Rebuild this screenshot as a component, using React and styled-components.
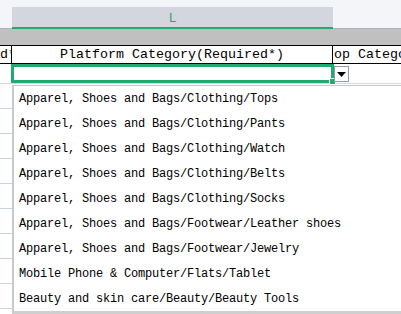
import React from "react";
import styled, { createGlobalStyle } from "styled-components";

const Global = createGlobalStyle`
  html, body { margin: 0; padding: 0; background: #ffffff; }
  #root { width: 401px; height: 314px; }
`;

const GREEN = "#1fab6e";
const MONO = `"Liberation Mono", "DejaVu Sans Mono", monospace`;

const Sheet = styled.div`
  position: relative;
  width: 401px;
  height: 314px;
  overflow: hidden;
  background: #ffffff;
  display: flex;
  flex-direction: column;
  & > * { flex-shrink: 0; }
`;

const ColumnBar = styled.div`
  box-sizing: border-box;
  height: 29px;
  padding: 7px 0 0 12px;
  background: #f4f5f8;
  border-bottom: 1px solid #aab6c8;
  display: flex;
  align-items: flex-start;
`;

const ColumnHead = styled.div`
  box-sizing: border-box;
  width: 321px;
  height: 22px;
  margin-bottom: -1px;
  background: #d3d6de;
  border-bottom: 2px solid ${GREEN};
  display: flex;
  align-items: center;
  justify-content: center;
  color: ${GREEN};
  font-family: "Liberation Sans", Arial, sans-serif;
  font-size: 13px;
  padding-top: 1px;
`;

const Band = styled.div`
  height: 16px;
  background: #c0c0c0;
`;

const Row = styled.div`
  display: grid;
  grid-template-columns: 12px 321px 1fr;
  height: ${(p) => p.$h}px;
  box-sizing: border-box;
  border-top: ${(p) => (p.$top ? `1px solid ${p.$top}` : "none")};
  border-bottom: ${(p) => (p.$bottom ? `1px solid ${p.$bottom}` : "none")};
`;

const HeadCell = styled.div`
  box-sizing: border-box;
  overflow: hidden;
  white-space: nowrap;
  display: flex;
  align-items: center;
  justify-content: ${(p) => p.$justify || "center"};
  border-right: ${(p) => (p.$line ? "1px solid #000" : "none")};
  font-family: ${MONO};
  font-size: 13.33px;
  color: #000;
  line-height: 1;
`;

const Clip = styled.span`
  margin-right: ${(p) => p.$mr || 0}px;
  padding-left: ${(p) => p.$pl || 0}px;
`;

const Cell = styled.div`
  position: relative;
  box-sizing: border-box;
  display: flex;
  align-items: center;
`;

const Selected = styled.div`
  position: absolute;
  left: -1px;
  right: -1px;
  top: 0;
  bottom: 0;
  border: 3px solid ${GREEN};
`;

const Handle = styled.div`
  position: absolute;
  right: -3px;
  bottom: -2px;
  width: 5px;
  height: 5px;
  background: ${GREEN};
  border: 1px solid #ffffff;
`;

const DropButton = styled.div`
  box-sizing: border-box;
  width: 15px;
  height: 16px;
  margin-left: 1px;
  margin-top: 1px;
  background: #ffffff;
  border: 1px solid #8f9bb0;
  display: flex;
  align-items: center;
  justify-content: center;
`;

const Grid = styled.div`
  display: flex;
  flex-direction: column;
`;

const GridLine = styled.div`
  height: 25px;
  flex: none;
  box-sizing: border-box;
  border-bottom: 1px solid #c9d2e2;
  width: 12px;
`;

const Menu = styled.div`
  position: absolute;
  left: 12px;
  top: 85px;
  width: 400px;
  height: 229px;
  box-sizing: border-box;
  background: #ffffff;
  border-top: 1px solid #c8c8c8;
  border-left: 2px solid #c6cad2;
  border-bottom: 3px solid #cfcfcf;
  display: flex;
  flex-direction: column;
`;

const Item = styled.div`
  height: 25px;
  flex: none;
  display: flex;
  align-items: center;
  padding-left: 5px;
  font-family: ${MONO};
  font-size: 12px;
  letter-spacing: -0.2px;
  color: #000;
  white-space: nowrap;
`;

const items = [
  "Apparel, Shoes and Bags/Clothing/Tops",
  "Apparel, Shoes and Bags/Clothing/Pants",
  "Apparel, Shoes and Bags/Clothing/Watch",
  "Apparel, Shoes and Bags/Clothing/Belts",
  "Apparel, Shoes and Bags/Clothing/Socks",
  "Apparel, Shoes and Bags/Footwear/Leather shoes",
  "Apparel, Shoes and Bags/Footwear/Jewelry",
  "Mobile Phone & Computer/Flats/Tablet",
  "Beauty and skin care/Beauty/Beauty Tools",
];

export default function App() {
  return (
    <>
      <Global />
      <Sheet>
        <ColumnBar>
          <ColumnHead>L</ColumnHead>
        </ColumnBar>
        <Band />
        <Row $h={19} $top="#000" $bottom="#000">
          <HeadCell $line $justify="flex-end">
            <Clip $mr={-5}>d*</Clip>
          </HeadCell>
          <HeadCell $line>Platform Category(Required*)</HeadCell>
          <HeadCell $justify="flex-start">
            <Clip $pl={1}>op Category(Required*)</Clip>
          </HeadCell>
        </Row>
        <Row $h={20} $bottom="#d3d9e4">
          <Cell />
          <Cell>
            <Selected />
            <Handle />
          </Cell>
          <Cell>
            <DropButton>
              <svg width="9" height="5" viewBox="0 0 9 5">
                <polygon points="0,0 9,0 4.5,5" fill="#000" />
              </svg>
            </DropButton>
          </Cell>
        </Row>
        <Grid>
          {Array.from({ length: 10 }).map((_, i) => (
            <GridLine key={i} />
          ))}
        </Grid>
        <Menu>
          {items.map((t) => (
            <Item key={t}>{t}</Item>
          ))}
        </Menu>
      </Sheet>
    </>
  );
}
